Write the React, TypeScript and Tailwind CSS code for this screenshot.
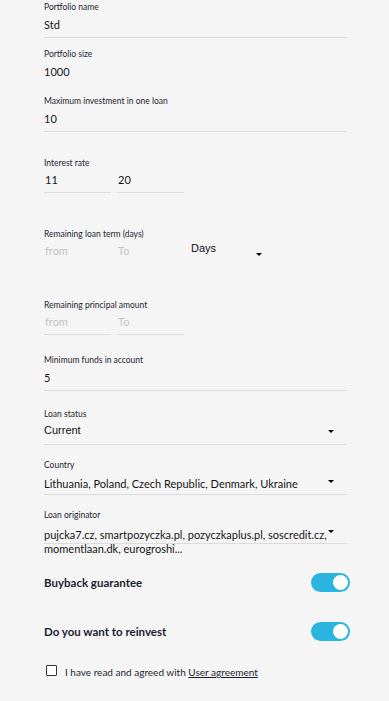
import type { ReactNode } from 'react'

const font = { fontFamily: 'Lato, "Noto Sans", sans-serif' }
const arial = { fontFamily: '"Liberation Sans", Arial, sans-serif' }

function Caret() {
  return <span className="block w-0 h-0 border-l-[3px] border-r-[3px] border-t-[3px] border-l-transparent border-r-transparent border-t-black" />
}

function Field({ label, className, children }: { label: string; className: string; children: ReactNode }) {
  return (
    <div className={className}>
      <div className="h-[14px] text-[8.5px] leading-[14px] text-[#1e1e30]">{label}</div>
      {children}
    </div>
  )
}

function TextInput({ value, line = true }: { value: string; line?: boolean }) {
  return (
    <div className={`h-[24px] border-b text-[11px] leading-[21px] text-[#151515] ${line ? 'border-[#dcdcdc]' : 'border-transparent'}`}>
      {value}
    </div>
  )
}

function Range({ from, to, line = true, muted = false }: { from: string; to: string; line?: boolean; muted?: boolean }) {
  const border = line ? 'border-[#dcdcdc]' : 'border-transparent'
  const color = muted ? 'text-[#c4c4c4]' : 'text-[#151515]'
  return (
    <div className="flex gap-[6px]">
      <div className={`w-[67px] h-[23px] border-b text-[11px] leading-[19px] pl-px ${border} ${color}`}>{from}</div>
      <div className={`w-[67px] h-[23px] border-b text-[11px] leading-[19px] pl-px ${border} ${color}`}>{to}</div>
    </div>
  )
}

function Toggle() {
  return (
    <div className="w-[39px] h-[19px] rounded-full bg-[#2ab5e1] p-[2px] flex justify-end">
      <div className="size-[15px] rounded-full bg-white" />
    </div>
  )
}

export default function App() {
  return (
    <div className="min-h-[701px] w-[389px] bg-[#f5f5f5] pl-[44px]" style={font}>
      <div className="w-[303px]">
        <Field label="Portfolio name" className="">
          <TextInput value="Std" />
        </Field>
        <Field label="Portfolio size" className="mt-[9px]">
          <TextInput value="1000" line={false} />
        </Field>
        <Field label="Maximum investment in one loan" className="mt-[9px]">
          <TextInput value="10" />
        </Field>
        <Field label="Interest rate" className="mt-[24px]">
          <Range from="11" to="20" />
        </Field>
        <Field label="Remaining loan term (days)" className="mt-[34px]">
          <div className="flex items-start">
            <Range from="from" to="To" line={false} muted />
            <div className="ml-[7px] w-[75px] h-[23px] flex justify-between pr-[4px]">
              <span className="text-[11px] leading-[14px] text-[#111]" style={arial}>Days</span>
              <span className="pt-[12px]"><Caret /></span>
            </div>
          </div>
        </Field>
        <Field label="Remaining principal amount" className="mt-[34px]">
          <Range from="from" to="To" muted />
        </Field>
        <Field label="Minimum funds in account" className="mt-[18px]">
          <TextInput value="5" />
        </Field>
        <Field label="Loan status" className="mt-[16px]">
          <div className="h-[24px] border-b border-[#dcdcdc] flex justify-between pr-[13px]">
            <span className="text-[11px] leading-[18px] text-[#111]" style={arial}>Current</span>
            <span className="pt-[9px]"><Caret /></span>
          </div>
        </Field>
        <Field label="Country" className="mt-[13px]">
          <div className="h-[23px] border-b border-[#dcdcdc] flex justify-between pr-[13px]">
            <span className="text-[11px] leading-[20px] pt-[2px] text-[#151515]">Lithuania, Poland, Czech Republic, Denmark, Ukraine</span>
            <span className="pt-[8px]"><Caret /></span>
          </div>
        </Field>
        <Field label="Loan originator" className="mt-[13px]">
          <div className="h-[22px] border-b border-[#dcdcdc] flex justify-between pr-[13px]">
            <div className="text-[11px] leading-[14px] pt-[6px] text-[#151515] whitespace-nowrap">
              pujcka7.cz, smartpozyczka.pl, pozyczkaplus.pl, soscredit.cz,
              <br />
              momentlaan.dk, eurogroshi...
            </div>
            <span className="pt-[8px]"><Caret /></span>
          </div>
        </Field>
      </div>
      <div className="w-[306px] mt-[29px] h-[19px] flex items-center justify-between">
        <span className="text-[11.5px] font-bold text-[#1e1e30]">Buyback guarantee</span>
        <Toggle />
      </div>
      <div className="w-[306px] mt-[30px] h-[19px] flex items-center justify-between">
        <span className="text-[11.5px] font-bold text-[#1e1e30]">Do you want to reinvest</span>
        <Toggle />
      </div>
      <div className="mt-[21px] flex items-center pl-[2px]">
        <div className="size-[11px] border-[1.5px] border-[#333] rounded-[1px] bg-white" />
        <span className="ml-[8px] text-[10px] leading-[12px] pt-[4px] text-[#1e1e30]">
          I have read and agreed with <span className="underline">User agreement</span>
        </span>
      </div>
    </div>
  )
}
